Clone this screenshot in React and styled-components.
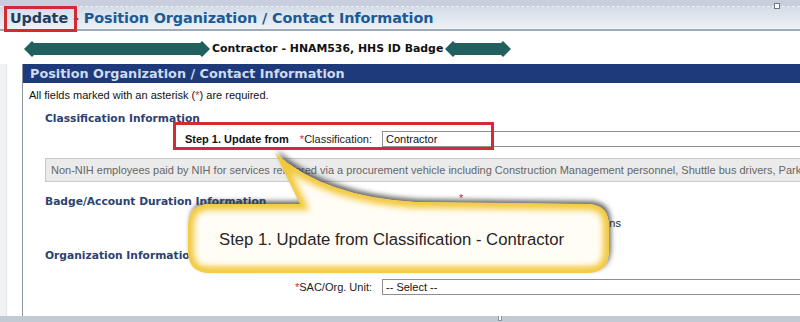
import React from "react";
import styled, { createGlobalStyle } from "styled-components";

const Global = createGlobalStyle`
  html, body { margin: 0; padding: 0; background: #fff; }
  body { font-family: "Liberation Sans", Arial, sans-serif; }
  #root { width: 800px; height: 322px; overflow: hidden; }
`;

const Page = styled.div`
  position: relative;
  width: 800px;
  height: 322px;
  overflow: hidden;
  display: flex;
  flex-direction: column;
  background: #fff;
`;

const Strip = styled.div`
  height: 6px;
  background: #c6cfdb;
  border-bottom: 1px dashed #eef2f7;
  display: flex;
  justify-content: flex-end;
  align-items: flex-end;
  padding-right: 20px;
`;

const StripMarker = styled.span`
  width: 4px;
  height: 4px;
  border: 1px solid #6d7682;
  background: #fff;
  margin-bottom: -3px;
`;

const TitleBar = styled.div`
  height: 22px;
  background: linear-gradient(#d3dce7, #eef2f7);
  border-bottom: 2px solid #9eabba;
  display: flex;
  align-items: center;
  padding-left: 10px;
`;

const Title = styled.h1`
  margin: 0;
  font-family: "DejaVu Sans", "Liberation Sans", sans-serif;
  font-size: 14.4px;
  letter-spacing: -0.1px;
  font-weight: bold;
  color: #1d5a94;
  white-space: nowrap;
`;

const Marked = styled.span`
  position: relative;
  color: #1f3d5c;
  &::after {
    content: "";
    position: absolute;
    left: -6px;
    top: -4px;
    width: 67px;
    height: 20px;
    border: 3px solid #d42a34;
  }
`;

const Subject = styled.div`
  height: 33px;
  display: flex;
  align-items: center;
  padding-left: 24px;
  padding-top: 2px;
  box-sizing: border-box;
`;

const SubjectText = styled.span`
  font-family: "DejaVu Sans", "Liberation Sans", sans-serif;
  font-size: 10.9px;
  font-weight: bold;
  color: #111;
  white-space: nowrap;
  margin: 0 2px;
`;

const Main = styled.div`
  flex: 1;
  display: flex;
  min-height: 0;
`;

const Gutter = styled.div`
  flex: none;
  width: 6px;
  background: #f1f2f4;
  border-right: 1px solid #e1e4e8;
`;

const Panel = styled.section`
  flex: 1;
  min-width: 0;
  margin-left: 15px;
  border-left: 1px solid #8c97a5;
  display: flex;
  flex-direction: column;
`;

const PanelHeader = styled.h2`
  margin: 0;
  height: 19px;
  background: #1e3a7a;
  color: #cddcf2;
  font-family: "DejaVu Sans", "Liberation Sans", sans-serif;
  font-size: 12.8px;
  font-weight: bold;
  line-height: 19px;
  padding-left: 7px;
  white-space: nowrap;
`;

const PanelBody = styled.div`
  flex: 1;
  display: flex;
  flex-direction: column;
  font-size: 11px;
  color: #111;
`;

const Note = styled.p`
  margin: 5px 0 0 6px;
  line-height: 14px;
`;

const Req = styled.span`
  color: #d42a34;
`;

const SectionTitle = styled.h3`
  margin: ${(p) => p.$top}px 0 0 22px;
  font-family: "DejaVu Sans", "Liberation Sans", sans-serif;
  font-size: 10.7px;
  font-weight: bold;
  color: #2c4370;
  line-height: 14px;
  white-space: nowrap;
`;

const FieldRow = styled.div`
  position: relative;
  display: grid;
  grid-template-columns: 349px 1fr;
  column-gap: 10px;
  align-items: center;
  margin-top: ${(p) => p.$top}px;
  height: 16px;
`;

const Label = styled.div`
  text-align: right;
  white-space: nowrap;
  color: #222;
`;

const StepLabel = styled.span`
  font-weight: bold;
  color: #111;
  margin-right: 11px;
`;

const Input = styled.div`
  height: 14px;
  border: 1px solid #8e8e8e;
  border-right: none;
  padding-left: 3px;
  line-height: 14px;
  color: #111;
  white-space: nowrap;
`;

const Annotation = styled.div`
  position: absolute;
  left: ${(p) => p.$left}px;
  top: ${(p) => p.$top}px;
  width: ${(p) => p.$w}px;
  height: ${(p) => p.$h}px;
  border: 3px solid #d42a34;
  pointer-events: none;
`;

const Description = styled.div`
  margin: 11px 0 0 22px;
  height: 22px;
  background: #ebebeb;
  border: 1px solid #c9c9c9;
  border-right: none;
  color: #666;
  line-height: 22px;
  padding-left: 5px;
  white-space: nowrap;
  overflow: hidden;
`;

const HiddenRow = styled.div`
  margin-top: ${(p) => p.$top}px;
  padding-left: ${(p) => p.$left}px;
  line-height: 12px;
  height: 12px;
  white-space: nowrap;
  color: #222;
`;

const BottomBar = styled.div`
  flex: none;
  height: 6px;
  background: #c2cad4;
  display: flex;
  padding-left: 498px;
`;

const BottomTick = styled.span`
  width: 2px;
  height: 4px;
  background: #f4f6f8;
  border: 1px solid #8c939c;
  border-top: none;
`;

const Callout = styled.div`
  position: absolute;
  left: 180px;
  top: 145px;
  width: 450px;
  height: 140px;
  pointer-events: none;
`;

const CalloutArt = styled.svg`
  position: absolute;
  inset: 0;
  overflow: visible;
`;

const CalloutText = styled.div`
  position: absolute;
  left: 39px;
  top: 85px;
  font-family: "Liberation Sans", Arial, sans-serif;
  font-size: 16.7px;
  color: #262626;
  white-space: nowrap;
`;

function Blob({ width }) {
  const h = 16;
  const m = h / 2;
  return (
    <svg width={width} height={h} viewBox={`0 0 ${width} ${h}`} style={{ flex: "none" }}>
      <rect x="6" y="2" width={width - 12} height="12" rx="5" fill="#21605f" />
      <polygon points={`0,${m} 8,0 16,${m} 8,${h}`} fill="#21605f" />
      <polygon points={`${width - 16},${m} ${width - 8},0 ${width},${m} ${width - 8},${h}`} fill="#21605f" />
    </svg>
  );
}

const calloutPath =
  "M 30,59 L 120,59 L 95,8 Q 145,52 236,57 L 407,59 Q 429,59 429,81 L 429,106 Q 429,128 407,128 L 30,128 Q 8,128 8,106 L 8,81 Q 8,59 30,59 Z";

export default function App() {
  return (
    <Page>
      <Global />
      <header>
        <Strip>
          <StripMarker />
        </Strip>
        <TitleBar>
          <Title>
            <Marked>Update</Marked> - Position Organization / Contact Information
          </Title>
        </TitleBar>
      </header>
      <Subject>
        <Blob width={186} />
        <SubjectText>Contractor - HNAM536, HHS ID Badge</SubjectText>
        <Blob width={66} />
      </Subject>
      <Main>
        <Gutter />
        <Panel>
          <PanelHeader>Position Organization / Contact Information</PanelHeader>
          <PanelBody>
            <Note>
              All fields marked with an asterisk (<Req>*</Req>) are required.
            </Note>
            <SectionTitle $top={10}>Classification Information</SectionTitle>
            <FieldRow $top={5}>
              <Label>
                <StepLabel>Step 1. Update from</StepLabel>
                <Req>*</Req>Classification:
              </Label>
              <Input>Contractor</Input>
              <Annotation $left={150} $top={-9} $w={315} $h={22} />
            </FieldRow>
            <Description>
              Non-NIH employees paid by NIH for services rendered via a procurement vehicle including Construction Management personnel, Shuttle bus drivers, Parking attendants
            </Description>
            <SectionTitle $top={13}>Badge/Account Duration Information</SectionTitle>
            <HiddenRow $top={-17} $left={436}>
              <Req>*</Req>
            </HiddenRow>
            <HiddenRow $top={13} $left={508}>
              Expiration Options
            </HiddenRow>
            <SectionTitle $top={20}>Organization Information</SectionTitle>
            <FieldRow $top={16}>
              <Label>
                <Req>*</Req>SAC/Org. Unit:
              </Label>
              <Input>-- Select --</Input>
            </FieldRow>
          </PanelBody>
        </Panel>
      </Main>
      <BottomBar>
        <BottomTick />
      </BottomBar>
      <Callout>
        <CalloutArt width="450" height="140" viewBox="0 0 450 140">
          <defs>
            <filter id="shadowBlur" x="-10%" y="-20%" width="120%" height="140%">
              <feGaussianBlur stdDeviation="2.5" />
            </filter>
            <filter id="glowBlur" x="-10%" y="-20%" width="120%" height="140%">
              <feGaussianBlur stdDeviation="3" />
            </filter>
            <clipPath id="calloutClip">
              <path d={calloutPath} />
            </clipPath>
          </defs>
          <path d={calloutPath} fill="#3a3a3a" opacity="0.75" transform="translate(2,-3)" filter="url(#shadowBlur)" />
          <g clipPath="url(#calloutClip)">
            <path d={calloutPath} fill="#fffdf6" />
            <path d={calloutPath} fill="none" stroke="#f2c83a" strokeWidth="12" filter="url(#glowBlur)" />
            <rect x="0" y="122" width="450" height="10" fill="#f5cf4a" opacity="0.5" filter="url(#glowBlur)" />
          </g>
        </CalloutArt>
        <CalloutText>Step 1. Update from Classification - Contractor</CalloutText>
      </Callout>
    </Page>
  );
}
